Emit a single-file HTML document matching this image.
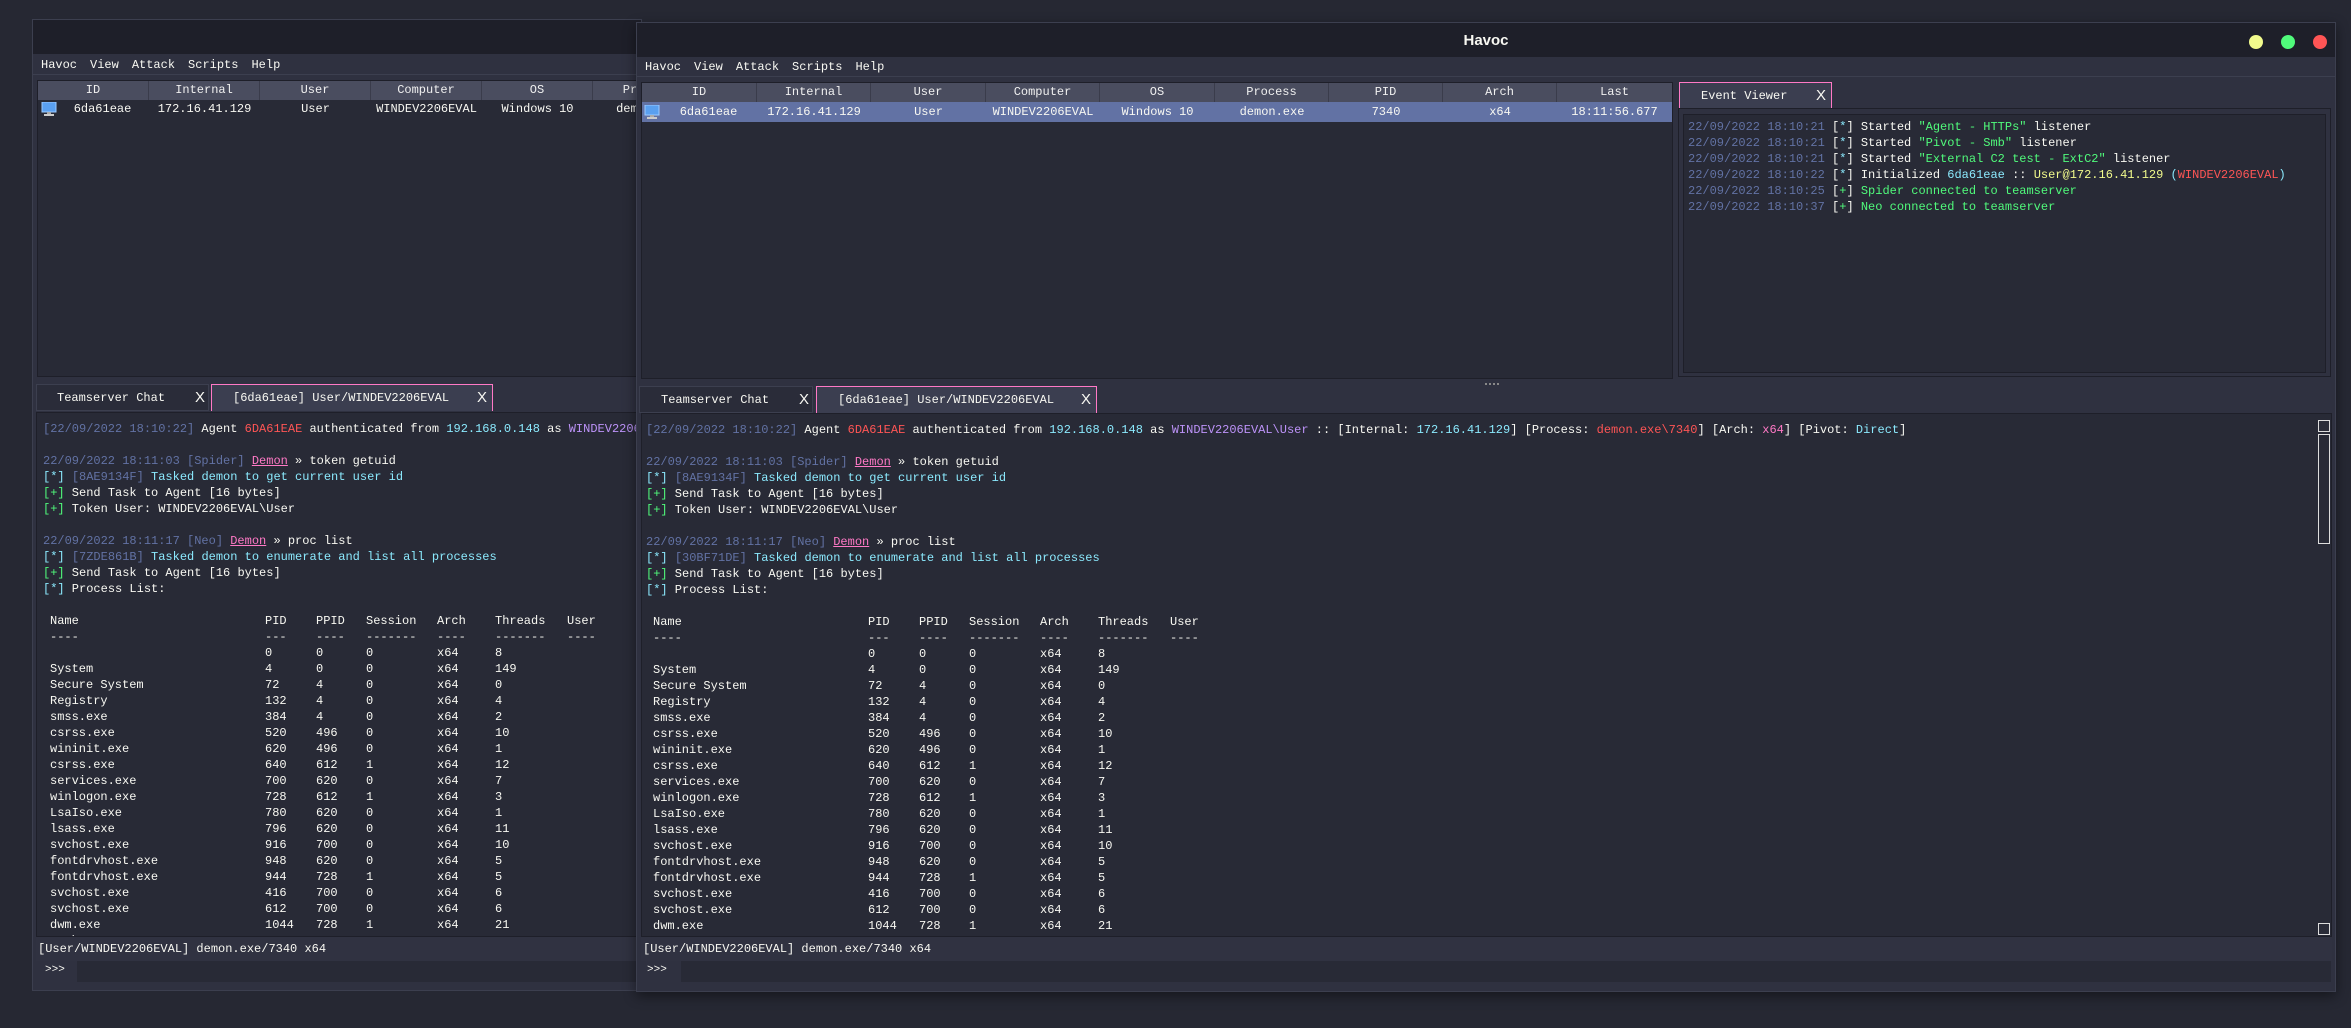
<!DOCTYPE html>
<html><head><meta charset="utf-8">
<style>
*{margin:0;padding:0;box-sizing:border-box}
body{width:2351px;height:1028px;background:#262833;position:relative;overflow:hidden;font-family:"Liberation Mono",monospace;font-size:12px;color:#f8f8f2}
.abs{position:absolute}
.win{position:absolute;background:#2f3140;border:1px solid #3c3f4f;overflow:hidden}
.title{position:absolute;left:0;right:0;top:0;height:34px;background:#1e1f29}
.menu{position:absolute;left:0;right:0;top:35px;height:19px;border-bottom:1px solid #3c3f4f}
.menu span{margin-right:13px;line-height:19px}
.tbl{position:absolute;background:#282a36;border:1px solid #1e1f29}
.hdr{position:absolute;top:0;height:19px;background:#4a4d5f;border-right:1px solid #3a3c4b;text-align:center;line-height:19px;color:#f0f0f0}
.cell{position:absolute;text-align:center;line-height:19px}
.tab{position:absolute;height:27px;background:#2a2c39;border:1px solid #3c3f4f;line-height:26px}
.tab.act{background:#3b3e50;border:1px solid #ff79c6;border-bottom:none}
.tab b{position:absolute;font-weight:normal;font-family:"Liberation Sans",sans-serif;font-size:15px}
.con{position:absolute;background:#282a36;border:1px solid #1e1f29;overflow:hidden}
.ln{height:16px;line-height:16px;white-space:pre}
.c{color:#6272a4}.cy{color:#8be9fd}.g{color:#50fa7b}.r{color:#ff5555}.p{color:#bd93f9}.k{color:#ff79c6}.y{color:#f1fa8c}
.u{text-decoration:underline}
.pr{display:flex;height:16px;line-height:16px;padding-left:7px;white-space:pre}
.pr span:nth-child(1){width:215px}.pr span:nth-child(2){width:51px}.pr span:nth-child(3){width:50px}.pr span:nth-child(4){width:71px}.pr span:nth-child(5){width:58px}.pr span:nth-child(6){width:72px}
.status{position:absolute;height:24px;line-height:24px;background:#303241}
.inp{position:absolute;height:21px;background:#282a36}
.icon{position:absolute;width:16px;height:14px}
</style></head><body>

<!-- LEFT WINDOW -->
<div class="win" style="left:32px;top:19px;width:610px;height:972px">
  <div class="title"></div>
  <div class="menu" style="padding-left:8px;top:36px"><span>Havoc</span><span>View</span><span>Attack</span><span>Scripts</span><span>Help</span></div>
  <div class="tbl" style="left:4px;top:60px;width:620px;height:297px">
    <div class="hdr" style="left:0;width:111px">ID</div>
    <div class="hdr" style="left:111px;width:111px">Internal</div>
    <div class="hdr" style="left:222px;width:111px">User</div>
    <div class="hdr" style="left:333px;width:111px">Computer</div>
    <div class="hdr" style="left:444px;width:111px">OS</div>
    <div class="hdr" style="left:555px;width:111px">Process</div>
    <svg class="icon" style="left:3px;top:21px" viewBox="0 0 16 14"><rect x="1" y="0" width="14" height="10" fill="#5aa0f0" stroke="#9ccaff" stroke-width="1"/><rect x="6" y="10" width="4" height="2" fill="#aaa"/><rect x="3" y="12" width="10" height="2" fill="#ccc"/></svg>
    <div class="cell" style="left:18px;width:93px;top:19px">6da61eae</div>
    <div class="cell" style="left:111px;width:111px;top:19px">172.16.41.129</div>
    <div class="cell" style="left:222px;width:111px;top:19px">User</div>
    <div class="cell" style="left:333px;width:111px;top:19px">WINDEV2206EVAL</div>
    <div class="cell" style="left:444px;width:111px;top:19px">Windows 10</div>
    <div class="cell" style="left:555px;width:111px;top:19px">demon.exe</div>
  </div>
  <div class="tab" style="left:3px;top:364px;width:173px"><span style="position:absolute;left:20px">Teamserver Chat</span><b style="left:158px">X</b></div>
  <div class="tab act" style="left:178px;top:364px;width:282px"><span style="position:absolute;left:21px">[6da61eae] User/WINDEV2206EVAL</span><b style="left:265px">X</b></div>
  <div class="con" style="left:3px;top:392px;width:620px;height:525px;padding:8px 0 0 6px">
    <div class="ln"><span class="c">[22/09/2022 18:10:22]</span> Agent <span class="r">6DA61EAE</span> authenticated from <span class="cy">192.168.0.148</span> as <span class="p">WINDEV2206EVAL\User</span> :: [Internal: <span class="cy">172.16.41.129</span>]</div>
    <div class="ln"> </div>
    <div class="ln"><span class="c">22/09/2022 18:11:03 [Spider]</span> <span class="k u">Demon</span> » token getuid</div>
    <div class="ln"><span class="cy">[*]</span> <span class="c">[8AE9134F]</span> <span class="cy">Tasked demon to get current user id</span></div>
    <div class="ln"><span class="g">[+]</span> Send Task to Agent [16 bytes]</div>
    <div class="ln"><span class="g">[+]</span> Token User: WINDEV2206EVAL\User</div>
    <div class="ln"> </div>
    <div class="ln"><span class="c">22/09/2022 18:11:17 [Neo]</span> <span class="k u">Demon</span> » proc list</div>
    <div class="ln"><span class="cy">[*]</span> <span class="c">[7ZDE861B]</span> <span class="cy">Tasked demon to enumerate and list all processes</span></div>
    <div class="ln"><span class="g">[+]</span> Send Task to Agent [16 bytes]</div>
    <div class="ln"><span class="cy">[*]</span> Process List:</div>
    <div class="ln"> </div>
    <div class="pr"><span>Name</span><span>PID</span><span>PPID</span><span>Session</span><span>Arch</span><span>Threads</span><span>User</span></div>
    <div class="pr"><span>----</span><span>---</span><span>----</span><span>-------</span><span>----</span><span>-------</span><span>----</span></div>
    <div class="pr"><span></span><span>0</span><span>0</span><span>0</span><span>x64</span><span>8</span></div>
    <div class="pr"><span>System</span><span>4</span><span>0</span><span>0</span><span>x64</span><span>149</span></div>
    <div class="pr"><span>Secure System</span><span>72</span><span>4</span><span>0</span><span>x64</span><span>0</span></div>
    <div class="pr"><span>Registry</span><span>132</span><span>4</span><span>0</span><span>x64</span><span>4</span></div>
    <div class="pr"><span>smss.exe</span><span>384</span><span>4</span><span>0</span><span>x64</span><span>2</span></div>
    <div class="pr"><span>csrss.exe</span><span>520</span><span>496</span><span>0</span><span>x64</span><span>10</span></div>
    <div class="pr"><span>wininit.exe</span><span>620</span><span>496</span><span>0</span><span>x64</span><span>1</span></div>
    <div class="pr"><span>csrss.exe</span><span>640</span><span>612</span><span>1</span><span>x64</span><span>12</span></div>
    <div class="pr"><span>services.exe</span><span>700</span><span>620</span><span>0</span><span>x64</span><span>7</span></div>
    <div class="pr"><span>winlogon.exe</span><span>728</span><span>612</span><span>1</span><span>x64</span><span>3</span></div>
    <div class="pr"><span>LsaIso.exe</span><span>780</span><span>620</span><span>0</span><span>x64</span><span>1</span></div>
    <div class="pr"><span>lsass.exe</span><span>796</span><span>620</span><span>0</span><span>x64</span><span>11</span></div>
    <div class="pr"><span>svchost.exe</span><span>916</span><span>700</span><span>0</span><span>x64</span><span>10</span></div>
    <div class="pr"><span>fontdrvhost.exe</span><span>948</span><span>620</span><span>0</span><span>x64</span><span>5</span></div>
    <div class="pr"><span>fontdrvhost.exe</span><span>944</span><span>728</span><span>1</span><span>x64</span><span>5</span></div>
    <div class="pr"><span>svchost.exe</span><span>416</span><span>700</span><span>0</span><span>x64</span><span>6</span></div>
    <div class="pr"><span>svchost.exe</span><span>612</span><span>700</span><span>0</span><span>x64</span><span>6</span></div>
    <div class="pr"><span>dwm.exe</span><span>1044</span><span>728</span><span>1</span><span>x64</span><span>21</span></div>
    <div class="pr"><span>svchost.exe</span><span>1108</span><span>700</span><span>0</span><span>x64</span><span>4</span></div>
  </div>
  <div class="status" style="left:3px;top:917px;width:620px;padding-left:2px">[User/WINDEV2206EVAL] demon.exe/7340 x64</div>
  <div class="abs" style="left:12px;top:944px;font-size:11px">&gt;&gt;&gt;</div>
  <div class="inp" style="left:44px;top:941px;width:580px"></div>
</div>

<!-- RIGHT WINDOW -->
<div class="win" style="left:636px;top:22px;width:1700px;height:970px;box-shadow:0 4px 12px rgba(0,0,0,.45)">
  <div class="title"><div class="abs" style="left:0;right:0;top:9px;text-align:center;font-family:'Liberation Sans',sans-serif;font-weight:bold;font-size:15px">Havoc</div>
    <div class="abs" style="left:1612px;top:12px;width:14px;height:14px;border-radius:50%;background:#f1fa8c"></div>
    <div class="abs" style="left:1644px;top:12px;width:14px;height:14px;border-radius:50%;background:#50fa7b"></div>
    <div class="abs" style="left:1676px;top:12px;width:14px;height:14px;border-radius:50%;background:#ff5555"></div>
  </div>
  <div class="menu" style="padding-left:8px"><span>Havoc</span><span>View</span><span>Attack</span><span>Scripts</span><span>Help</span></div>
  <div class="tbl" style="left:4px;top:59px;width:1032px;height:297px">
    <div class="hdr" style="left:0;width:115px">ID</div>
    <div class="hdr" style="left:115px;width:114px">Internal</div>
    <div class="hdr" style="left:229px;width:115px">User</div>
    <div class="hdr" style="left:344px;width:114px">Computer</div>
    <div class="hdr" style="left:458px;width:115px">OS</div>
    <div class="hdr" style="left:573px;width:114px">Process</div>
    <div class="hdr" style="left:687px;width:114px">PID</div>
    <div class="hdr" style="left:801px;width:114px">Arch</div>
    <div class="hdr" style="left:915px;width:115px;border-right:none">Last</div>
    <div class="abs" style="left:0;top:19px;width:1030px;height:20px;background:#6272a4"></div>
    <svg class="icon" style="left:2px;top:22px" viewBox="0 0 16 14"><rect x="1" y="0" width="14" height="10" fill="#5aa0f0" stroke="#9ccaff" stroke-width="1"/><rect x="6" y="10" width="4" height="2" fill="#aaa"/><rect x="3" y="12" width="10" height="2" fill="#ccc"/></svg>
    <div class="cell" style="left:18px;width:97px;top:20px">6da61eae</div>
    <div class="cell" style="left:115px;width:114px;top:20px">172.16.41.129</div>
    <div class="cell" style="left:229px;width:115px;top:20px">User</div>
    <div class="cell" style="left:344px;width:114px;top:20px">WINDEV2206EVAL</div>
    <div class="cell" style="left:458px;width:115px;top:20px">Windows 10</div>
    <div class="cell" style="left:573px;width:114px;top:20px">demon.exe</div>
    <div class="cell" style="left:687px;width:114px;top:20px">7340</div>
    <div class="cell" style="left:801px;width:114px;top:20px">x64</div>
    <div class="cell" style="left:915px;width:115px;top:20px">18:11:56.677</div>
  </div>
  <!-- event viewer -->
  <div class="tab act" style="left:1042px;top:59px;width:153px;height:28px"><span style="position:absolute;left:21px">Event Viewer</span><b style="left:136px">X</b></div>
  <div class="abs" style="left:1041px;top:85px;width:653px;height:269px;border:1px solid #1e1f29;background:#2f3140"></div>
  <div class="con" style="left:1046px;top:91px;width:643px;height:259px;padding:4px 0 0 4px">
    <div class="ln"><span class="c">22/09/2022 18:10:21</span> [<span class="cy">*</span>] Started <span class="g">"Agent - HTTPs"</span> listener</div>
    <div class="ln"><span class="c">22/09/2022 18:10:21</span> [<span class="cy">*</span>] Started <span class="g">"Pivot - Smb"</span> listener</div>
    <div class="ln"><span class="c">22/09/2022 18:10:21</span> [<span class="cy">*</span>] Started <span class="g">"External C2 test - ExtC2"</span> listener</div>
    <div class="ln"><span class="c">22/09/2022 18:10:22</span> [<span class="cy">*</span>] Initialized <span class="cy">6da61eae</span> :: <span class="y">User@172.16.41.129</span> <span class="cy">(</span><span class="r">WINDEV2206EVAL</span><span class="cy">)</span></div>
    <div class="ln"><span class="c">22/09/2022 18:10:25</span> [<span class="g">+</span>] <span class="g">Spider connected to teamserver</span></div>
    <div class="ln"><span class="c">22/09/2022 18:10:37</span> [<span class="g">+</span>] <span class="g">Neo connected to teamserver</span></div>
  </div>
  <div class="abs" style="left:848px;top:360px;width:14px;height:2px;border-top:2px dotted #888"></div>
  <div class="tab" style="left:2px;top:363px;width:174px"><span style="position:absolute;left:21px">Teamserver Chat</span><b style="left:159px">X</b></div>
  <div class="tab act" style="left:179px;top:363px;width:281px"><span style="position:absolute;left:21px">[6da61eae] User/WINDEV2206EVAL</span><b style="left:264px">X</b></div>
  <div class="con" style="left:4px;top:390px;width:1691px;height:524px;padding:8px 0 0 4px">
    <div class="ln"><span class="c">[22/09/2022 18:10:22]</span> Agent <span class="r">6DA61EAE</span> authenticated from <span class="cy">192.168.0.148</span> as <span class="p">WINDEV2206EVAL\User</span> :: [Internal: <span class="cy">172.16.41.129</span>] [Process: <span class="r">demon.exe\7340</span>] [Arch: <span class="k">x64</span>] [Pivot: <span class="cy">Direct</span>]</div>
    <div class="ln"> </div>
    <div class="ln"><span class="c">22/09/2022 18:11:03 [Spider]</span> <span class="k u">Demon</span> » token getuid</div>
    <div class="ln"><span class="cy">[*]</span> <span class="c">[8AE9134F]</span> <span class="cy">Tasked demon to get current user id</span></div>
    <div class="ln"><span class="g">[+]</span> Send Task to Agent [16 bytes]</div>
    <div class="ln"><span class="g">[+]</span> Token User: WINDEV2206EVAL\User</div>
    <div class="ln"> </div>
    <div class="ln"><span class="c">22/09/2022 18:11:17 [Neo]</span> <span class="k u">Demon</span> » proc list</div>
    <div class="ln"><span class="cy">[*]</span> <span class="c">[30BF71DE]</span> <span class="cy">Tasked demon to enumerate and list all processes</span></div>
    <div class="ln"><span class="g">[+]</span> Send Task to Agent [16 bytes]</div>
    <div class="ln"><span class="cy">[*]</span> Process List:</div>
    <div class="ln"> </div>
    <div class="pr"><span>Name</span><span>PID</span><span>PPID</span><span>Session</span><span>Arch</span><span>Threads</span><span>User</span></div>
    <div class="pr"><span>----</span><span>---</span><span>----</span><span>-------</span><span>----</span><span>-------</span><span>----</span></div>
    <div class="pr"><span></span><span>0</span><span>0</span><span>0</span><span>x64</span><span>8</span></div>
    <div class="pr"><span>System</span><span>4</span><span>0</span><span>0</span><span>x64</span><span>149</span></div>
    <div class="pr"><span>Secure System</span><span>72</span><span>4</span><span>0</span><span>x64</span><span>0</span></div>
    <div class="pr"><span>Registry</span><span>132</span><span>4</span><span>0</span><span>x64</span><span>4</span></div>
    <div class="pr"><span>smss.exe</span><span>384</span><span>4</span><span>0</span><span>x64</span><span>2</span></div>
    <div class="pr"><span>csrss.exe</span><span>520</span><span>496</span><span>0</span><span>x64</span><span>10</span></div>
    <div class="pr"><span>wininit.exe</span><span>620</span><span>496</span><span>0</span><span>x64</span><span>1</span></div>
    <div class="pr"><span>csrss.exe</span><span>640</span><span>612</span><span>1</span><span>x64</span><span>12</span></div>
    <div class="pr"><span>services.exe</span><span>700</span><span>620</span><span>0</span><span>x64</span><span>7</span></div>
    <div class="pr"><span>winlogon.exe</span><span>728</span><span>612</span><span>1</span><span>x64</span><span>3</span></div>
    <div class="pr"><span>LsaIso.exe</span><span>780</span><span>620</span><span>0</span><span>x64</span><span>1</span></div>
    <div class="pr"><span>lsass.exe</span><span>796</span><span>620</span><span>0</span><span>x64</span><span>11</span></div>
    <div class="pr"><span>svchost.exe</span><span>916</span><span>700</span><span>0</span><span>x64</span><span>10</span></div>
    <div class="pr"><span>fontdrvhost.exe</span><span>948</span><span>620</span><span>0</span><span>x64</span><span>5</span></div>
    <div class="pr"><span>fontdrvhost.exe</span><span>944</span><span>728</span><span>1</span><span>x64</span><span>5</span></div>
    <div class="pr"><span>svchost.exe</span><span>416</span><span>700</span><span>0</span><span>x64</span><span>6</span></div>
    <div class="pr"><span>svchost.exe</span><span>612</span><span>700</span><span>0</span><span>x64</span><span>6</span></div>
    <div class="pr"><span>dwm.exe</span><span>1044</span><span>728</span><span>1</span><span>x64</span><span>21</span></div>
    <!-- scrollbar -->
    <div class="abs" style="left:1676px;top:6px;width:12px;height:12px;border:1px solid #ddd;background:#2a2c38"></div>
    <div class="abs" style="left:1676px;top:20px;width:12px;height:110px;border:1px solid #ddd"></div>
    <div class="abs" style="left:1676px;top:509px;width:12px;height:12px;border:1px solid #ddd;background:#2a2c38"></div>
  </div>
  <div class="status" style="left:4px;top:914px;width:1691px;padding-left:2px">[User/WINDEV2206EVAL] demon.exe/7340 x64</div>
  <div class="abs" style="left:10px;top:941px;font-size:11px">&gt;&gt;&gt;</div>
  <div class="inp" style="left:44px;top:938px;width:1650px"></div>
</div>
</body></html>
